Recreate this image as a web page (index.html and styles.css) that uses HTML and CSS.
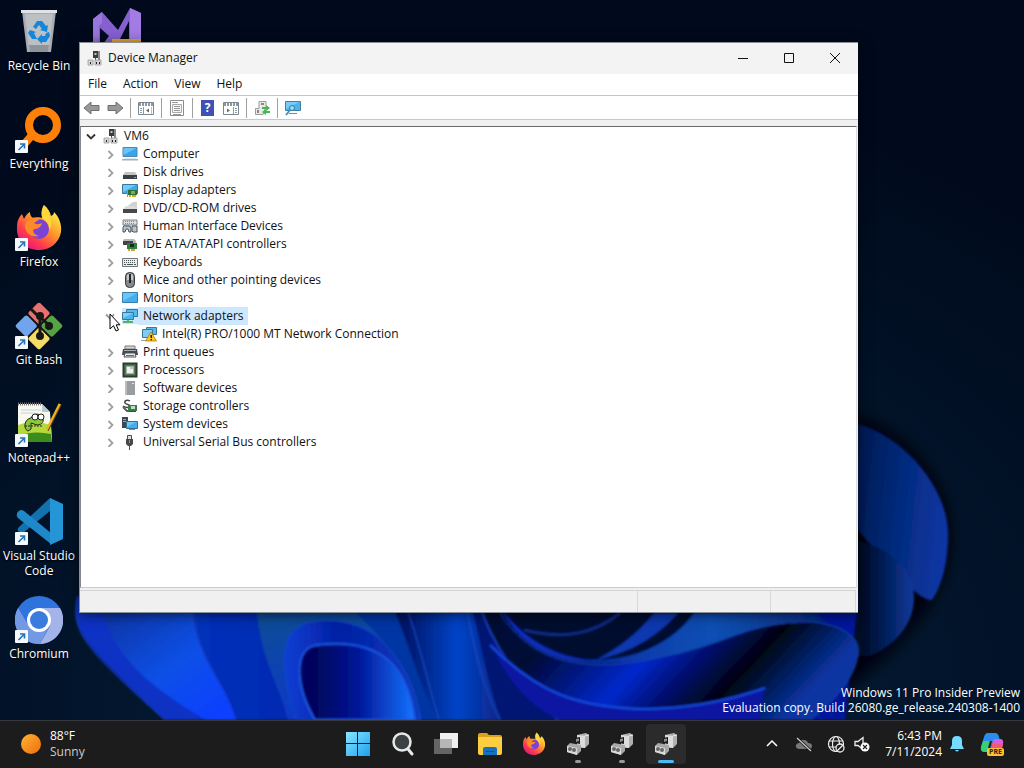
FILE: index.html
```html
<!DOCTYPE html>
<html lang="en">
<head>
  <meta charset="UTF-8" />
  <meta name="viewport" content="width=device-width, initial-scale=1.0"/>
  <title>Device Manager</title>
  <link rel="stylesheet" href="styles.css">
</head>
<body>

  <!-- Shared icons -->
  <svg class="sprite" aria-hidden="true">
    <symbol id="i-shortcut" viewBox="0 0 13 13">
      <rect width="13" height="13" rx="1" fill="#f4f8fc"/>
      <path d="M3.500 10 9 4.500M5 4h4.500v4.500" fill="none" stroke="#2374b8" stroke-width="1.600"/>
    </symbol>
    <symbol id="i-right" viewBox="0 0 10 10">
      <path d="M3.500 2 7.500 6 3.500 10" fill="none" stroke="#a0a0a0" stroke-width="1.800"/>
    </symbol>
    <symbol id="i-down" viewBox="0 0 10 10">
      <path d="M1 3.500 5 7.500 9 3.500" fill="none" stroke="#333" stroke-width="1.800"/>
    </symbol>
    <symbol id="i-pc" viewBox="0 0 16 16">
      <path d="M6 1h6v7H6z" fill="#3c3c3c"/>
      <path d="M11 1h2v9h-2z" fill="#8c8c8c"/>
      <path d="M7.500 3h2v2h-2z" fill="#b9c4cc"/>
      <path d="M8 8h1v3H8z" fill="#555"/>
      <path d="M1 10h5v5H1zM8 10h6v5H8z" fill="#d6d6d6" stroke="#999" stroke-width=".8"/>
      <path d="M3 12h1v2H3zM9 12h1v2H9zM12 12h1v2h-1z" fill="#222"/>
    </symbol>
    <symbol id="i-monitor" viewBox="0 0 16 16">
      <path d="M.5 2.500h15v10H.5z" fill="#43aef0" stroke="#3a7da8"/>
      <path d="M1 3h14L1 11z" fill="#8ad3fb" opacity=".6"/>
    </symbol>
    <symbol id="i-computer" viewBox="0 0 16 16">
      <path d="M1 1.500h14v9H1z" fill="#35a5ee" stroke="#4b87ad"/>
      <path d="M1.500 2h13l-13 7z" fill="#86d0fa" opacity=".7"/>
      <path d="M2 12h12v1H2z" fill="#dfe7ec"/>
      <path d="M0 13h16v1.500H0z" fill="#a8b0b5"/>
    </symbol>
    <symbol id="i-disk" viewBox="0 0 16 16">
      <path d="M3 8h10l2 3H1z" fill="#c4c4c4"/>
      <path d="M1 11h14v4H1z" fill="#3a3f44"/>
      <path d="M12 13h2v1h-2z" fill="#9aa09c"/>
    </symbol>
    <symbol id="i-display" viewBox="0 0 16 16">
      <path d="M.5 2.500h15v9H.5z" fill="#3ea9ec" stroke="#35799f"/>
      <path d="M1 3h13L1 10z" fill="#90d7fb" opacity=".7"/>
      <path d="M6 8h9v5H6z" fill="#2b6e35"/>
      <path d="M9 9h4v3H9z" fill="#7fae58"/>
      <path d="M7 13h2v2H7zM10 13h4v2h-4z" fill="#d8a828"/>
      <path d="M5 8h1v7H5z" fill="#8d9aa0"/>
    </symbol>
    <symbol id="i-dvd" viewBox="0 0 16 16">
      <path d="M6 6c3-4 7-5 9-4v8H3z" fill="#d2d2d2"/>
      <path d="M4 6h8l3 3H1z" fill="#dcdcdc"/>
      <path d="M1 9h14v4H1z" fill="#44494d"/>
    </symbol>
    <symbol id="i-hid" viewBox="0 0 16 16">
      <path d="M1 2h14v5H1z" fill="#dadcdd" stroke="#7c8082"/>
      <path d="M3 3.500h10M3 5.500h10" stroke="#858c90" stroke-dasharray="1 1"/>
      <path d="M1 14V9q1-2 3-1h3q2 0 2 3v3H7l-1-3H4l-1 3zM10 13V8h5v6h-4z" fill="#b9c6cf" stroke="#4a5358"/>
    </symbol>
    <symbol id="i-ide" viewBox="0 0 16 16">
      <path d="M2 3h10l2 2v3H1V5z" fill="#b7b9ba"/>
      <path d="M1 5h10v4H1z" fill="#3f4447"/>
      <path d="M5 7h10v6H5z" fill="#2f7c3c"/>
      <path d="M8 8h4v3H8z" fill="#172b1a"/>
      <path d="M6 13h2v2H6zM9 13h4v2H9z" fill="#cfa12b"/>
    </symbol>
    <symbol id="i-keyboard" viewBox="0 0 16 16">
      <path d="M.5 4.500h15v8H.5z" fill="#ececec" stroke="#70777b"/>
      <path d="M2 6.500h12M2 8.500h12" stroke="#4d5458" stroke-dasharray="1 1"/>
      <path d="M2 10.500h2M5 10.500h6M12 10.500h2" stroke="#4d5458"/>
    </symbol>
    <symbol id="i-mouse" viewBox="0 0 16 16">
      <rect x="3.500" y=".5" width="9" height="15" rx="4" fill="#84898b" stroke="#33383a"/>
      <path d="M5 3q3-3 6 0v5H5z" fill="#c5c7c8"/>
      <path d="M7 2h2v9H7z" fill="#252525"/>
    </symbol>
    <symbol id="i-net" viewBox="0 0 16 16">
      <path d="M4.500 1.500h11v7h-11z" fill="#54b8f2" stroke="#3a7699"/>
      <path d="M.5 4.500h11v7H.5z" fill="#4db4f0" stroke="#3a7699"/>
      <path d="M1 5h10l-10 5z" fill="#9bdafa" opacity=".7"/>
      <path d="M5 12h2v1h4v2H1v-2h4z" fill="#54b06b"/>
    </symbol>
    <symbol id="i-netwarn" viewBox="0 0 16 16">
      <path d="M5.500 1.500h10v7h-10z" fill="#54b8f2" stroke="#3a7699"/>
      <path d="M1.500 3.500h10v8h-10z" fill="#7fcbf5" stroke="#3a7699"/>
      <path d="M0 14h6v1H0z" fill="#98a4aa"/>
      <path d="M10 6 15.500 15h-11z" fill="#ffc61a" stroke="#a87a10" stroke-width=".8"/>
      <path d="M9.500 9H11v3H9.500zM9.500 13H11v1.200H9.500z" fill="#222"/>
    </symbol>
    <symbol id="i-printer" viewBox="0 0 16 16">
      <path d="M3 2h10v3H3z" fill="#d5d8da" stroke="#777"/>
      <path d="M1 5h14l1 6H0z" fill="#44494c"/>
      <path d="M2 6h12v1H2z" fill="#a6abad"/>
      <path d="M3 9h10l1 4H2z" fill="#eee" stroke="#4f5456"/>
      <path d="M4 11h8v1H4z" fill="#666"/>
    </symbol>
    <symbol id="i-cpu" viewBox="0 0 16 16">
      <path d="M1.500 1.500h13v13h-13z" fill="#56775c" stroke="#2c3b2f" stroke-width="2"/>
      <path d="M4.500 4.500h7v7h-7z" fill="#eef1ee" stroke="#9db5a1"/>
      <path d="M8 5h3v2H8z" fill="#bcc8be"/>
    </symbol>
    <symbol id="i-soft" viewBox="0 0 16 16">
      <path d="M3 1h10v14H3z" fill="#989da0"/>
      <path d="M3 1h2v14H3z" fill="#b9bdbf"/>
      <path d="M10 3h2v1h-2z" fill="#e4ebe4"/>
    </symbol>
    <symbol id="i-storage" viewBox="0 0 16 16">
      <path d="M8 3C5 1 2 3 3 5s5 1 5 3-4 2-7 0" fill="none" stroke="#42484b" stroke-width="1.500"/>
      <path d="m1 9 4 4h3" fill="none" stroke="#5b6265" stroke-width="2"/>
      <path d="M6 7h9v6H6z" fill="#3a7b48"/>
      <path d="M9 8h4v3H9z" fill="#c4d8c8"/>
      <path d="M7 13h7v1H7z" fill="#444"/>
    </symbol>
    <symbol id="i-system" viewBox="0 0 16 16">
      <path d="M0 1h6v11H0z" fill="#3c4852"/>
      <path d="M1 3h3v1H1zM1 5h3v1H1z" fill="#5fb9eb"/>
      <path d="M4.500 5.500h11v7h-11z" fill="#42aef0" stroke="#396f91"/>
      <path d="M5 6h9l-9 5z" fill="#8dd5fb" opacity=".6"/>
      <path d="M7 13h6v1H7z" fill="#888"/>
    </symbol>
    <symbol id="i-usb" viewBox="0 0 16 16">
      <path d="M5.500 1.500h4v4h-4z" fill="#ddd" stroke="#4c4c4c"/>
      <path d="M4 5h7v5l-2 2H6l-2-2z" fill="#484848"/>
      <path d="M7 12h1v4H7z" fill="#555"/>
      <path d="M7 6h1v3H7z" fill="#999"/>
    </symbol>
    <symbol id="i-firefox" viewBox="0 0 48 48">
      <defs>
        <linearGradient id="fox" x1=".85" y1=".1" x2=".2" y2=".95">
          <stop offset="0" stop-color="#fff04a"/>
          <stop offset=".4" stop-color="#ff9a2a"/>
          <stop offset=".75" stop-color="#ff3a4c"/>
          <stop offset="1" stop-color="#e31587"/>
        </linearGradient>
      </defs>
      <path d="M29 1c4 3 6 7 7 11 2-1 3-2 3-4 5 5 8 12 7 20-2 11-11 18-22 18C11 46 1 37 2 23c0-6 2-10 5-13l2 5c1-3 4-6 6-7 0 3 1 5 3 6 4-1 7-1 9 0-1-5 0-9 2-13z" fill="url(#fox)"/>
      <circle cx="24" cy="25" r="10" fill="#7a43d6"/>
      <path d="M13 16c4-3 8-3 12-1l-6 4c3 2 6 1 8 0-1 4-4 6-8 6-2 2 0 6 5 7-7 2-14-3-14-9 0-3 1-5 3-7z" fill="#ff8a2a"/>
      <path d="M28 15c4 2 7 6 6 11 3-4 3-10 0-14-3-4-5-6-5-11-3 5-3 9-1 14z" fill="#ffd83c"/>
    </symbol>
    <symbol id="i-devices" viewBox="0 0 24 24">
      <path d="m11 3 9-2 3 2v9l-4 4-7-1z" fill="#b0b0b0"/>
      <path d="m11 3 8 1v12l-8-1z" fill="#dcdcdc"/>
      <path d="m19 4 4-1" stroke="#eee"/>
      <path d="m9 6 5-1v7l-5-1z" fill="#1c1c1c"/>
      <path d="m10 7 3-.5V9l-3 1z" fill="#8e8e8e"/>
      <path d="m1 14 3-3 11 2v6l-4 4-10-3z" fill="#a8a8a8"/>
      <path d="m1 14 10 2v7L1 20z" fill="#dadada"/>
      <circle cx="4" cy="17" r="2" fill="#666"/>
      <circle cx="8" cy="18" r="2" fill="#666"/>
    </symbol>
  </svg>

  <!-- Wallpaper -->
  <svg class="wallpaper" viewBox="0 0 1024 768" preserveAspectRatio="xMidYMax slice" aria-hidden="true">
    <defs>
      <radialGradient id="sky" cx=".5" cy=".9" r=".8">
        <stop offset="0" stop-color="#04203c"/>
        <stop offset=".6" stop-color="#021329"/>
        <stop offset="1" stop-color="#000a1c"/>
      </radialGradient>
      <linearGradient id="leaf" x1="0" y1="0" x2=".8" y2="1">
        <stop offset="0" stop-color="#06309a"/>
        <stop offset=".6" stop-color="#0b50e6"/>
        <stop offset="1" stop-color="#1040ff"/>
      </linearGradient>
      <linearGradient id="middle" x1="0" x2="1">
        <stop offset="0" stop-color="#0838c8"/>
        <stop offset=".5" stop-color="#04209e"/>
        <stop offset="1" stop-color="#04189a"/>
      </linearGradient>
      <linearGradient id="teal" x1="0" y1="0" x2=".3" y2="1">
        <stop offset="0" stop-color="#07508c"/>
        <stop offset="1" stop-color="#1238cc"/>
      </linearGradient>
      <linearGradient id="arch" x1="0" x2="1">
        <stop offset="0" stop-color="#0c3fd4"/>
        <stop offset=".4" stop-color="#0420a4"/>
        <stop offset="1" stop-color="#0a3abc"/>
      </linearGradient>
      <linearGradient id="core">
        <stop offset=".15" stop-color="#00065e"/>
        <stop offset=".5" stop-color="#021597"/>
        <stop offset="1" stop-color="#1474ff"/>
      </linearGradient>
      <linearGradient id="ridge">
        <stop offset="0" stop-color="#01094d"/>
        <stop offset=".6" stop-color="#0544c8"/>
        <stop offset="1" stop-color="#082486"/>
      </linearGradient>
      <linearGradient id="wave" x1="0" x2="1">
        <stop offset="0" stop-color="#0b2dcc"/>
        <stop offset=".3" stop-color="#0630a5"/>
        <stop offset=".65" stop-color="#0a50b4"/>
        <stop offset="1" stop-color="#062c80"/>
      </linearGradient>
      <linearGradient id="fold" x1="0" y1="0" x2="1" y2=".3">
        <stop offset="0" stop-color="#01083f"/>
        <stop offset=".2" stop-color="#000733"/>
        <stop offset=".5" stop-color="#0628cc"/>
        <stop offset=".66" stop-color="#020a60"/>
        <stop offset=".78" stop-color="#000512"/>
        <stop offset="1" stop-color="#0834a2"/>
      </linearGradient>
      <linearGradient id="side" x1="0" y1=".3" x2="1" y2=".5">
        <stop offset="0" stop-color="#04194e"/>
        <stop offset=".6" stop-color="#062d84"/>
        <stop offset="1" stop-color="#0a36a4"/>
      </linearGradient>
      <linearGradient id="side2">
        <stop offset=".2" stop-color="#020b28"/>
        <stop offset="1" stop-color="#093a9c"/>
      </linearGradient>
      <filter id="haze"><feGaussianBlur stdDeviation="7"/></filter>
      <filter id="soft"><feGaussianBlur stdDeviation="1"/></filter>
    </defs>
    <rect width="1024" height="768" fill="url(#sky)"/>
    <path d="M850 415c60 15 100 70 100 122 0 70-60 120-143 183H700V415z" fill="#00030f" filter="url(#haze)"/>
    <g filter="url(#soft)">
      <path d="M850 422c52 10 98 66 98 112 0 26-5 50-16 66-10 2-34-22-74-70z" fill="url(#side)"/>
      <path d="M850 540c38 4 64 30 64 58 0 27-20 48-44 58h-20z" fill="url(#side2)"/>
      <path d="M77 596c-6 38 12 52 88 124h680l13-124z" fill="url(#middle)"/>
      <path d="M77 596c-6 38 12 52 88 124h41C128 672 108 640 100 596z" fill="#0732c4"/>
      <path d="M77 600c-6 34 12 52 88 120" fill="none" stroke="#184be0"/>
      <path d="M100 600c8 50 44 84 106 120h30c-12-42-42-60-44-120z" fill="url(#leaf)"/>
      <path d="M256 600c4 62 24 84 32 120h145c-6-50-32-88-41-120z" fill="url(#teal)"/>
      <path d="M340 600c40 30 70 70 82 120h16c-12-50-32-88-41-120z" fill="#0636a4"/>
      <path d="M297 720c-16-42-18-80 0-92 21-14 63-8 84 12 24 24 36 52 39 80z" fill="url(#arch)" stroke="#164ac8"/>
      <path d="M315 720c-19-32-23-72 2-75 67-8 92 25 98 75z" fill="url(#core)" stroke="#1b55e2" stroke-width="2"/>
      <path d="M390 600c20 44 28 84 48 120h64c-16-50-21-84-31-120z" fill="url(#ridge)"/>
      <path d="M404 600c16 44 24 84 35 120M466 605c8 42 16 82 34 115" fill="none" stroke="#1a4fd2"/>
      <path d="M470 600h250v120H502c-18-50-23-90-32-120z" fill="#010830"/>
      <path d="M479 605c17 52 48 88 95 115h-72c-14-34-21-78-31-115z" fill="#051572"/>
      <path d="M480 606c12 38 36 72 78 114" fill="none" stroke="#1741c0" stroke-width="2"/>
      <path d="M500 607c22 38 52 56 98 57 92-2 124-44 218-42 28 3 42 16 42 28 0 28-28 54-48 70H560c-38-28-60-58-60-113z" fill="url(#fold)"/>
      <path d="M500 607c22 30 48 46 82 52 42 5 88-12 112-46h120l12 9c-66-7-102 25-164 35-80 14-132 7-162-50z" fill="url(#wave)"/>
      <path d="M510 607c20 30 44 42 76 48 28-2 52-18 74-42z" fill="#01082e"/>
      <path d="M524 630c40 10 70 4 96-17" fill="none" stroke="#0f2c80" stroke-width="3"/>
      <path d="M596 660c38-8 64-26 82-47h-24c-16 20-34 34-58 47z" fill="#0b38b0"/>
      <path d="M500 613c28 44 70 55 120 51 80-8 118-44 194-42 30 4 44 16 44 28 0 26-25 52-48 70" fill="none" stroke="#1647b0"/>
      <path d="M490 640c34 42 78 62 120 67 52 6 116-4 155-19l-6 32H560c-34-14-60-50-70-80z" fill="#0718a0"/>
      <path d="M490 645c50 50 90 62 150 64 44 0 88-8 125-21" fill="none" stroke="#194ce0" stroke-width="2"/>
    </g>
  </svg>

  <main class="desktop">

    <!-- Desktop shortcuts -->
    <nav class="shortcuts" aria-label="Desktop">
      <a href="#" class="shortcut">
        <span class="shortcut-icon">
          <svg viewBox="0 0 48 48">
            <path d="M7 3h34l-5 41H12z" fill="#a6acb1"/>
            <path d="M10 6h28l-4 35H14z" fill="#c3c7ca" opacity=".75"/>
            <path d="M6 2h36v3H6z" fill="#dfe3e6"/>
            <path d="m14 37 1 7h18l1-7z" fill="#8f9499"/>
            <g fill="#1685dc">
              <path d="m18 19 4-6h5l4 5 2-1-1 7-7-2 2-1-3-4-3 4z"/>
              <path d="m15 22 6 2-2 1 3 6h-5l-4-6z"/>
              <path d="m34 24 1 4-4 6h-4v2l-5-5 5-5v2h3l1-3z"/>
            </g>
          </svg>
        </span>
        <span class="shortcut-label">Recycle Bin</span>
      </a>
      <a href="#" class="shortcut">
        <span class="shortcut-icon">
          <svg viewBox="0 0 48 48">
            <path d="m18 28-12 14" stroke="#ff8008" stroke-width="8"/>
            <circle cx="28" cy="19" r="14" fill="none" stroke="#ff8008" stroke-width="8"/>
          </svg>
          <svg class="arrow"><use href="#i-shortcut"/></svg>
        </span>
        <span class="shortcut-label">Everything</span>
      </a>
      <a href="#" class="shortcut">
        <span class="shortcut-icon">
          <svg><use href="#i-firefox"/></svg>
          <svg class="arrow"><use href="#i-shortcut"/></svg>
        </span>
        <span class="shortcut-label">Firefox</span>
      </a>
      <a href="#" class="shortcut">
        <span class="shortcut-icon">
          <svg viewBox="0 0 48 48">
            <rect x="6.500" y="6.500" width="35" height="35" rx="3" transform="rotate(45 24 24)" fill="#111"/>
            <rect x="7" y="7" width="16" height="16" rx="2" transform="rotate(45 24 24)" fill="#e97070"/>
            <rect x="25" y="7" width="16" height="16" rx="2" transform="rotate(45 24 24)" fill="#56a345"/>
            <rect x="7" y="25" width="16" height="16" rx="2" transform="rotate(45 24 24)" fill="#72a4ee"/>
            <rect x="25" y="25" width="16" height="16" rx="2" transform="rotate(45 24 24)" fill="#f5dc65"/>
            <path d="m16 7 9 9v18M25 15l9 8" fill="none" stroke="#171717" stroke-width="3"/>
            <circle cx="25" cy="14" r="4" fill="#171717"/>
            <circle cx="34" cy="24" r="4" fill="#171717"/>
            <circle cx="25" cy="34" r="4" fill="#171717"/>
          </svg>
          <svg class="arrow"><use href="#i-shortcut"/></svg>
        </span>
        <span class="shortcut-label">Git Bash</span>
      </a>
      <a href="#" class="shortcut">
        <span class="shortcut-icon">
          <svg viewBox="0 0 48 48">
            <path d="M3 4h24l8 8 2 30H3z" fill="#f7f8ee"/>
            <path d="M3 25q15-6 33 0l1 17H3z" fill="#b4d93c"/>
            <path d="M3 36q15-6 33-2l1 8H3z" fill="#3b8c1d"/>
            <path d="M3 4h24" stroke="#777" stroke-width="3" stroke-dasharray="1 1"/>
            <path d="M6 10h20M6 13h14" stroke="#c9d3d8"/>
            <path d="M27 4v8h8z" fill="#b9c8d2"/>
            <path d="M13 31c-5-2-4-12 3-13 2-5 9-5 11-1 3 4 0 8-5 8l-6-2v6z" fill="#87c93a" stroke="#222"/>
            <circle cx="20" cy="17" r="3" fill="#fff" stroke="#222"/>
            <circle cx="26" cy="17" r="3" fill="#fff" stroke="#222"/>
            <path d="M10 26h18" stroke="#222" stroke-dasharray="2 1"/>
            <path d="M45 4 32 30" stroke="#f0b11e" stroke-width="3"/>
            <path d="m46 5-13 26" stroke="#4a3d20"/>
          </svg>
          <svg class="arrow"><use href="#i-shortcut"/></svg>
        </span>
        <span class="shortcut-label">Notepad++</span>
      </a>
      <a href="#" class="shortcut">
        <span class="shortcut-icon">
          <svg viewBox="0 0 48 48">
            <path d="M35 0v13L8 35q-3 1-5-2-1-2 1-4z" fill="#1272b0"/>
            <path d="M2 15q3-5 7-2l27 22v11L3 20q-2-2-1-5z" fill="#1f88c8"/>
            <path d="m35 0 13 6v35l-13 6z" fill="#2496d8"/>
          </svg>
          <svg class="arrow"><use href="#i-shortcut"/></svg>
        </span>
        <span class="shortcut-label">Visual Studio Code</span>
      </a>
      <a href="#" class="shortcut">
        <span class="shortcut-icon">
          <svg viewBox="0 0 48 48">
            <circle cx="24" cy="24" r="24" fill="#2f73dc"/>
            <path d="M3 12a24 24 0 0 0 22 36l9-18-20 0z" fill="#7499e4"/>
            <path d="M24 12h21a24 24 0 0 1-20 36l10-18z" fill="#a4b4e8"/>
            <circle cx="24" cy="24" r="12" fill="#fff"/>
            <circle cx="24" cy="24" r="9" fill="#3b7bdd"/>
          </svg>
          <svg class="arrow"><use href="#i-shortcut"/></svg>
        </span>
        <span class="shortcut-label">Chromium</span>
      </a>
      <a href="#" class="shortcut" aria-label="Visual Studio">
        <span class="shortcut-icon">
          <svg viewBox="0 0 48 48">
            <path d="M0 11 9 4l16 18L37 0l11 5v40H0z" fill="#8660cf"/>
            <path d="m0 11 9-7v11l-3 3v27H0z" fill="#9a75dc"/>
            <path d="m7 20 9 8-9 12z" fill="#000a1c"/>
            <path d="M36 13v18h-9z" fill="#000a1c"/>
            <path d="m37 0 11 5v40H37z" fill="#a27be4"/>
            <path d="M19 31h29v12H19z" fill="#e8a829"/>
          </svg>
        </span>
      </a>
    </nav>

    <p class="watermark">Windows 11 Pro Insider Preview<br>Evaluation copy. Build 26080.ge_release.240308-1400</p>

    <!-- Device Manager window -->
    <section class="window">
      <header class="titlebar">
        <svg class="icon"><use href="#i-pc"/></svg>
        <h1>Device Manager</h1>
        <div class="window-buttons">
          <button type="button" aria-label="Minimize"><svg viewBox="0 0 12 12"><path d="M1 6.500h10"/></svg></button>
          <button type="button" aria-label="Maximize"><svg viewBox="0 0 12 12"><path d="M1.500 1.500h9v9h-9z"/></svg></button>
          <button type="button" aria-label="Close"><svg viewBox="0 0 12 12"><path d="m1 1 10 10M11 1 1 11"/></svg></button>
        </div>
      </header>

      <div class="menubar">
        <button type="button">File</button>
        <button type="button">Action</button>
        <button type="button">View</button>
        <button type="button">Help</button>
      </div>

      <div class="toolbar">
        <button type="button" aria-label="Back"><svg viewBox="0 0 18 18"><path d="m1 9 7-6v3.500h8v5H8V15z" fill="#999" stroke="#6e6e6e"/></svg></button>
        <button type="button" aria-label="Forward"><svg viewBox="0 0 18 18"><path d="m17 9-7-6v3.500H2v5h8V15z" fill="#999" stroke="#6e6e6e"/></svg></button>
        <span class="divider"></span>
        <button type="button" aria-label="Show console tree"><svg viewBox="0 0 18 18"><path d="M1.500 3.500h15v12h-15z" fill="#fff" stroke="#7b8790"/><path d="M2 5.500h14" stroke="#8a98a5" stroke-width="3" stroke-dasharray="2 1"/><path d="M6.500 8v7M3 9.500h2M3 11.500h2M3 13.500h2" stroke="#8c9ba7"/><path d="m9 11.500 3-2v4z" fill="#5a6d60"/><path d="M14.500 8v7" stroke="#b7c2ca"/></svg></button>
        <span class="divider"></span>
        <button type="button" aria-label="Properties"><svg viewBox="0 0 18 18"><path d="M2.500 1.500h13v15h-13z" fill="#fff" stroke="#8b8b8b"/><path d="M4.500 5.500h9v8h-9z" fill="#f5f5f5" stroke="#aaa"/><path d="M4 3.500h6M6 7.500h6M6 9.500h6M6 11.500h6M5 15.500h8" stroke="#999"/></svg></button>
        <span class="divider"></span>
        <button type="button" class="help" aria-label="Help topics"><span>?</span></button>
        <button type="button" aria-label="Show action pane"><svg viewBox="0 0 18 18"><path d="M1.500 3.500h15v12h-15z" fill="#fff" stroke="#7b8790"/><path d="M2 5.500h14" stroke="#8a98a5" stroke-width="3" stroke-dasharray="2 1"/><path d="M11.500 8v7M13 9.500h2M13 11.500h2M13 13.500h2" stroke="#8c9ba7"/><path d="m8 11.500-3-2v4z" fill="#4f7f58"/></svg></button>
        <span class="divider"></span>
        <button type="button" aria-label="Scan for hardware changes"><svg viewBox="0 0 18 18"><path d="M6 2.500h7v5l-3 8H2.500v-6H6z" fill="#e9e9e9" stroke="#9b9b9b"/><path d="M8 4h3v2H8zM4 11h2v3H4z" fill="#888"/><path d="m17 9-4-3v2H9v2h4v2zM9 13l4-3v2h4v2h-4v2z" fill="#45b650"/></svg></button>
        <span class="divider"></span>
        <button type="button" aria-label="Add drivers"><svg viewBox="0 0 18 18"><path d="M1.500 2.500h15v9h-15z" fill="#4bb4ef" stroke="#407f9f"/><path d="M2 3h13L2 10z" fill="#8bd4fa" opacity=".7"/><path d="M5 14h8v1H5z" fill="#888"/><circle cx="8" cy="9" r="2.500" fill="#9ddcfb" stroke="#3479a4"/><path d="m6 11-4 5" stroke="#4b90b9" stroke-width="2"/></svg></button>
      </div>

      <div class="tree">
        <ul class="root">
          <li>
            <div class="row">
              <button type="button" class="expander" aria-label="Collapse VM6"><svg><use href="#i-down"/></svg></button>
              <svg class="icon"><use href="#i-pc"/></svg>
              <span class="name">VM6</span>
            </div>
            <ul>
              <li class="row"><button type="button" class="expander" aria-label="Expand"><svg><use href="#i-right"/></svg></button><svg class="icon"><use href="#i-computer"/></svg><span class="name">Computer</span></li>
              <li class="row"><button type="button" class="expander" aria-label="Expand"><svg><use href="#i-right"/></svg></button><svg class="icon"><use href="#i-disk"/></svg><span class="name">Disk drives</span></li>
              <li class="row"><button type="button" class="expander" aria-label="Expand"><svg><use href="#i-right"/></svg></button><svg class="icon"><use href="#i-display"/></svg><span class="name">Display adapters</span></li>
              <li class="row"><button type="button" class="expander" aria-label="Expand"><svg><use href="#i-right"/></svg></button><svg class="icon"><use href="#i-dvd"/></svg><span class="name">DVD/CD-ROM drives</span></li>
              <li class="row"><button type="button" class="expander" aria-label="Expand"><svg><use href="#i-right"/></svg></button><svg class="icon"><use href="#i-hid"/></svg><span class="name">Human Interface Devices</span></li>
              <li class="row"><button type="button" class="expander" aria-label="Expand"><svg><use href="#i-right"/></svg></button><svg class="icon"><use href="#i-ide"/></svg><span class="name">IDE ATA/ATAPI controllers</span></li>
              <li class="row"><button type="button" class="expander" aria-label="Expand"><svg><use href="#i-right"/></svg></button><svg class="icon"><use href="#i-keyboard"/></svg><span class="name">Keyboards</span></li>
              <li class="row"><button type="button" class="expander" aria-label="Expand"><svg><use href="#i-right"/></svg></button><svg class="icon"><use href="#i-mouse"/></svg><span class="name">Mice and other pointing devices</span></li>
              <li class="row"><button type="button" class="expander" aria-label="Expand"><svg><use href="#i-right"/></svg></button><svg class="icon"><use href="#i-monitor"/></svg><span class="name">Monitors</span></li>
              <li>
                <div class="row selected">
                  <button type="button" class="expander" aria-label="Collapse">
                    <svg><use href="#i-down"/></svg>
                    <svg class="cursor" viewBox="0 0 12 19"><path d="M1 1v15l3.500-3.300L7 18l2.500-1-2.300-5.200H11z" fill="#fff" stroke="#000"/></svg>
                  </button>
                  <svg class="icon"><use href="#i-net"/></svg>
                  <span class="name">Network adapters</span>
                </div>
                <ul>
                  <li class="row"><span class="expander"></span><svg class="icon"><use href="#i-netwarn"/></svg><span class="name">Intel(R) PRO/1000 MT Network Connection</span></li>
                </ul>
              </li>
              <li class="row"><button type="button" class="expander" aria-label="Expand"><svg><use href="#i-right"/></svg></button><svg class="icon"><use href="#i-printer"/></svg><span class="name">Print queues</span></li>
              <li class="row"><button type="button" class="expander" aria-label="Expand"><svg><use href="#i-right"/></svg></button><svg class="icon"><use href="#i-cpu"/></svg><span class="name">Processors</span></li>
              <li class="row"><button type="button" class="expander" aria-label="Expand"><svg><use href="#i-right"/></svg></button><svg class="icon"><use href="#i-soft"/></svg><span class="name">Software devices</span></li>
              <li class="row"><button type="button" class="expander" aria-label="Expand"><svg><use href="#i-right"/></svg></button><svg class="icon"><use href="#i-storage"/></svg><span class="name">Storage controllers</span></li>
              <li class="row"><button type="button" class="expander" aria-label="Expand"><svg><use href="#i-right"/></svg></button><svg class="icon"><use href="#i-system"/></svg><span class="name">System devices</span></li>
              <li class="row"><button type="button" class="expander" aria-label="Expand"><svg><use href="#i-right"/></svg></button><svg class="icon"><use href="#i-usb"/></svg><span class="name">Universal Serial Bus controllers</span></li>
            </ul>
          </li>
        </ul>
      </div>

      <footer class="statusbar"><span></span><span></span><span></span></footer>
    </section>
  </main>

  <!-- Taskbar -->
  <footer class="taskbar">
    <button type="button" class="weather">
      <svg viewBox="0 0 22 22"><defs><linearGradient id="sun" x2="1" y2="1"><stop offset="0" stop-color="#ffb52e"/><stop offset="1" stop-color="#ee6b12"/></linearGradient></defs><circle cx="11" cy="11" r="10" fill="url(#sun)"/></svg>
      <span>88°F<br><small>Sunny</small></span>
    </button>

    <div class="apps">
      <button type="button" aria-label="Start"><svg viewBox="0 0 24 24"><defs><linearGradient id="win" x2="1" y2="1"><stop offset="0" stop-color="#8ae6ff"/><stop offset="1" stop-color="#1ba0ee"/></linearGradient></defs><path d="M0 0h11v11H0zM12 0h12v11H12zM0 12h11v12H0zM12 12h12v12H12z" fill="url(#win)"/></svg></button>
      <button type="button" aria-label="Search"><svg viewBox="0 0 24 24"><circle cx="12" cy="10" r="8.500" fill="#3c4144" stroke="#e8e8e8" stroke-width="2.500"/><path d="m18 17 4 5" stroke="#e8e8e8" stroke-width="3" stroke-linecap="round"/></svg></button>
      <button type="button" aria-label="Task view"><svg viewBox="0 0 24 24"><path d="M0 7h18v15H0z" fill="#656565"/><path d="M6 1h18v15H6z" fill="#f0f0f0"/><path d="M6 7h12v9H6z" fill="#b7b7b7"/></svg></button>
      <button type="button" aria-label="File Explorer"><svg viewBox="0 0 24 24"><path d="M0 3q0-2 2-2h7l2 2h11q2 0 2 2v3H0z" fill="#dda117"/><path d="M0 5h24v16q0 2-2 2H2q-2 0-2-2z" fill="#ffcd42"/><path d="M5 23v-6q0-2 2-2h10q2 0 2 2v6z" fill="#1672bf"/><path d="M8 19h8v1H8z" fill="#0b4f8c"/></svg></button>
      <button type="button" aria-label="Firefox"><svg><use href="#i-firefox"/></svg></button>
      <button type="button" class="running" aria-label="Device Manager 1"><svg><use href="#i-devices"/></svg></button>
      <button type="button" class="running" aria-label="Device Manager 2"><svg><use href="#i-devices"/></svg></button>
      <button type="button" class="running active" aria-label="Device Manager 3"><svg><use href="#i-devices"/></svg></button>
    </div>

    <div class="tray">
      <button type="button" aria-label="Hidden icons"><svg viewBox="0 0 18 18"><path d="m4 11 5-5 5 5" fill="none" stroke="#fff" stroke-width="1.500"/></svg></button>
      <button type="button" aria-label="OneDrive"><svg viewBox="0 0 18 18"><path d="M4 14q-4-1-3-4 1-2 3-2 2-4 5-3 3 0 4 3 4 0 4 3t-3 3z" fill="#777"/><path d="m2 3 14 13" stroke="#1c1c1c" stroke-width="3"/><path d="m2 3 14 13" stroke="#ccc" stroke-width="1.200"/></svg></button>
      <div class="status">
        <button type="button" aria-label="No internet"><svg viewBox="0 0 18 18"><g fill="none" stroke="#eee" stroke-width="1.200"><circle cx="9" cy="9" r="7.500"/><ellipse cx="9" cy="9" rx="3.500" ry="7.500"/><path d="M2 6h14M2 12h14"/></g><circle cx="13" cy="13" r="4" fill="#1c1c1c" stroke="#eee" stroke-width="1.300"/><path d="m10 16 6-6" stroke="#eee" stroke-width="1.200"/></svg></button>
        <button type="button" aria-label="No audio"><svg viewBox="0 0 18 18"><path d="M2 6.500h3l5-4v12l-5-4H2z" fill="none" stroke="#eee" stroke-width="1.300"/><circle cx="12" cy="12" r="4.500" fill="#fff"/><path d="m10 10 4 4M14 10l-4 4" stroke="#222" stroke-width="1.200"/></svg></button>
      </div>
      <button type="button" class="clock">6:43 PM<br>7/11/2024</button>
      <button type="button" aria-label="Notifications"><svg viewBox="0 0 18 18"><path d="M9 1Q4 1 4 6v4l-2 4h14l-2-4V6q0-5-5-5z" fill="#74dcff"/><path d="M7 15h4q-2 3-4 0z" fill="#74dcff"/></svg></button>
      <button type="button" class="copilot" aria-label="Copilot">
        <svg viewBox="0 0 24 24"><path d="M8 1h7q3 0 4 4l1 4h-7L9 20H5q-5 0-4-5l3-10q1-4 4-4z" fill="#2b8cf0"/><path d="M3 9h8L8 20H5q-5 0-4-5z" fill="#39cf76"/><path d="M15 7h5q4 0 3 5l-2 8H10l2-8q1-5 3-5z" fill="#d65de0"/><path d="M12 12h11l-2 8H10z" fill="#f05a7a"/><path d="m11 9-2 7" stroke="#1c1c1c" stroke-width="2"/></svg>
        <span class="badge">PRE</span>
      </button>
    </div>
  </footer>
</body>
</html>
```

FILE: styles.css
```css
* { box-sizing: border-box; }

body {
  font-family: "Open Sans", "Noto Sans", sans-serif;
  font-size: 12px;
  display: flex;
  flex-direction: column;
  height: 100vh;
  margin: 0;
  overflow: hidden;
  background-color: #000a1c;
  color: #111;
}

button {
  font: inherit;
  color: inherit;
  padding: 0;
  border: none;
  background: none;
}

svg {
  display: block;
}

ul {
  list-style: none;
  margin: 0;
  padding: 0;
}

.sprite {
  position: absolute;
  width: 0;
  height: 0;
}

.wallpaper {
  position: absolute;
  inset: 0;
  width: 100%;
  height: 100%;
  z-index: -1;
}

.desktop {
  position: relative;
  flex: 1;
  min-height: 0;
}

/* Shortcuts */
.shortcuts {
  display: grid;
  grid-auto-flow: column;
  grid-template-rows: repeat(7, 98px);
  grid-auto-columns: 78px;
  padding-top: 8px;
}

.shortcut {
  display: flex;
  flex-direction: column;
  align-items: center;
  gap: 2px;
  color: white;
  text-align: center;
  text-decoration: none;
  text-shadow: 0 1px 2px black;
}

.shortcut-icon {
  position: relative;
}

.shortcut-icon svg {
  width: 48px;
  height: 48px;
}

.shortcut-icon .arrow {
  position: absolute;
  left: 0;
  bottom: 1px;
  width: 13px;
  height: 13px;
}

.shortcut-label {
  line-height: 15px;
}

.watermark {
  position: absolute;
  right: 4px;
  bottom: 5px;
  margin: 0;
  color: white;
  line-height: 15px;
  text-align: right;
}

/* Window */
.window {
  position: absolute;
  inset: 42px 166px 107px 79px;
  display: flex;
  flex-direction: column;
  border: 1px solid #8b8f98;
  border-right: none;
  background-color: #f0f0f0;
  box-shadow: 0 2px 12px rgba(0, 0, 0, 0.6);
}

.icon {
  width: 16px;
  height: 16px;
  flex: none;
}

.titlebar {
  display: flex;
  align-items: center;
  gap: 5px;
  height: 31px;
  padding: 0 0 2px 7px;
  background-color: #f3f3f3;
}

.titlebar h1 {
  flex: 1;
  margin: 0;
  font-size: 12px;
  font-weight: normal;
}

.window-buttons {
  display: flex;
}

.window-buttons button {
  display: grid;
  place-items: center;
  width: 46px;
  height: 28px;
}

.window-buttons svg {
  width: 12px;
  height: 12px;
  fill: none;
  stroke: #111;
}

.menubar {
  display: flex;
  height: 21px;
  padding-bottom: 2px;
  background-color: white;
}

.menubar button {
  padding: 0 8px;
}

.toolbar {
  display: flex;
  align-items: center;
  gap: 2px;
  height: 25px;
  padding: 0 1px;
  border-top: 1px solid #c4c4c4;
  border-bottom: 1px solid #c9c9c9;
  background-color: white;
}

.toolbar button {
  display: grid;
  place-items: center;
  width: 21px;
  height: 22px;
}

.toolbar svg {
  width: 18px;
  height: 18px;
}

.toolbar .divider {
  width: 1px;
  height: 20px;
  margin: 0 2px 0 3px;
  background-color: #a0a0a0;
}

.help span {
  width: 13px;
  background-color: #3f51b5;
  color: white;
  font-weight: bold;
  line-height: 16px;
}

.tree {
  flex: 1;
  min-height: 0;
  margin: 6px 1px 0 0;
  border: 1px solid #828790;
  border-top-color: #696969;
  border-right-color: #ddd;
  border-bottom-color: #ccc;
  background-color: white;
  overflow: hidden;
}

.tree ul ul {
  padding-left: 19px;
}

.row {
  display: flex;
  align-items: center;
  height: 18px;
  padding-left: 5px;
}

.expander {
  position: relative;
  width: 10px;
  height: 10px;
  margin-right: 7px;
}

.expander svg {
  width: 10px;
  height: 10px;
}

.expander .cursor {
  position: absolute;
  left: 4px;
  top: 2px;
  width: 12px;
  height: 19px;
  z-index: 1;
}

.selected .expander use {
  opacity: 0.5;
}

.name {
  padding: 0 4px 0 5px;
  line-height: 18px;
}

.selected .name {
  background-color: #cce8ff;
}

.selected .icon {
  background-color: #cce8ff;
}

.statusbar {
  display: grid;
  grid-template-columns: 1fr 133px 85px;
  height: 24px;
  margin-right: 2px;
  padding-top: 2px;
}

.statusbar span {
  border-top: 1px solid #d5d5d5;
  border-right: 1px solid #d8d8d8;
}

/* Taskbar */
.taskbar {
  display: grid;
  grid-template-columns: 1fr auto 1fr;
  align-items: center;
  height: 48px;
  padding-bottom: 1px;
  border-top: 1px solid #34373d;
  background-color: #1c1c1c;
  color: white;
  line-height: 16px;
}

.weather {
  justify-self: start;
  display: flex;
  align-items: center;
  gap: 8px;
  padding-left: 20px;
  text-align: left;
}

.weather svg {
  width: 22px;
  height: 22px;
}

.weather small {
  font-size: 12px;
  color: #ccc;
}

.apps {
  display: flex;
  gap: 4px;
}

.apps button {
  position: relative;
  display: grid;
  place-items: center;
  width: 40px;
  height: 40px;
  border-radius: 4px;
}

.apps svg {
  width: 24px;
  height: 24px;
}

.apps .active {
  background-color: #2b2b2b;
}

.running::after {
  content: "";
  position: absolute;
  left: 50%;
  bottom: 1px;
  width: 6px;
  height: 3px;
  border-radius: 2px;
  background-color: #999;
  transform: translateX(-50%);
}

.running.active::after {
  width: 16px;
  background-color: #4cb8f5;
}

.tray {
  justify-self: end;
  display: flex;
  align-items: center;
  gap: 14px;
  padding-right: 20px;
}

.tray svg {
  width: 18px;
  height: 18px;
}

.status {
  display: flex;
  gap: 8px;
}

.clock {
  text-align: right;
}

.clock + button {
  margin-left: -8px;
}

.copilot {
  position: relative;
}

.tray .copilot svg {
  width: 24px;
  height: 24px;
}

.badge {
  position: absolute;
  right: 0;
  bottom: 0;
  padding: 0 2px;
  border-radius: 2px;
  background-color: #ffc02e;
  color: #222;
  font-size: 7px;
  font-weight: bold;
  line-height: 8px;
}
```
